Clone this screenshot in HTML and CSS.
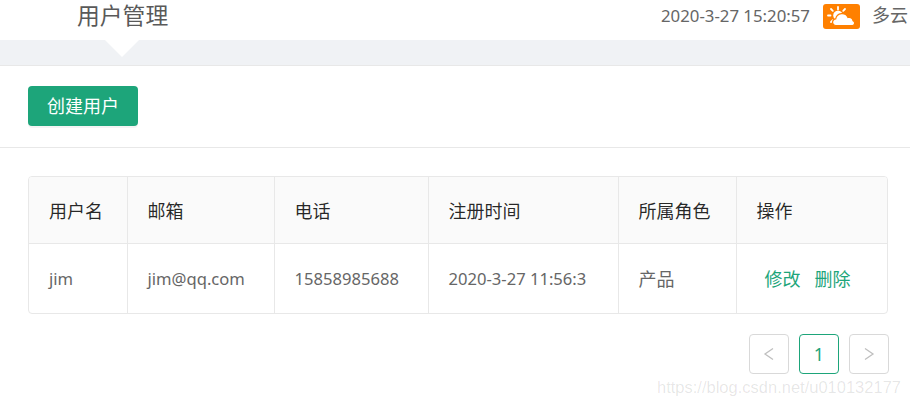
FILE: index.html
```html
<!DOCTYPE html>
<html lang="zh-CN">
<head>
	<meta charset="utf-8">
	<title>用户管理</title>
	<link rel="stylesheet" href="styles.css">
</head>
<body>
	<div class="top-bar">
		<h1 class="page-title">用户管理</h1>
		<div class="top-info">
			<span class="now-time">2020-3-27 15:20:57</span>
			<span class="weather-icon">
				<svg width="37" height="25" viewBox="0 0 37 25">
					<g stroke="#fff" stroke-width="1.800" stroke-linecap="round">
						<path d="M15 3v2.500M8 5l1.800 1.800M5 11.500h2.500M8 18l1.800-1.800M22 5l-1.800 1.800"/>
					</g>
					<circle cx="15" cy="11.500" r="4.800" fill="#fff"/>
					<path d="M13 21.500a3.300 3.300 0 0 1 -.3-6.600a6.500 6.500 0 0 1 12.300-1.400a4.200 4.200 0 0 1 5 3.200a2.500 2.500 0 0 1 -.5 4.800z" fill="#fff" stroke="#ff8000" stroke-width="1.200"/>
				</svg>
			</span>
			<span class="weather-text">多云</span>
		</div>
	</div>
	<div class="crumb-band"><span class="crumb-arrow"></span></div>
	<div class="action-bar">
		<button class="create-btn">创建用户</button>
	</div>
	<div class="content">
		<div class="table-wrapper">
			<table class="user-table">
				<colgroup>
					<col class="col-name">
					<col class="col-mail">
					<col class="col-phone">
					<col class="col-time">
					<col class="col-role">
					<col>
				</colgroup>
				<thead>
					<tr>
						<th>用户名</th>
						<th>邮箱</th>
						<th>电话</th>
						<th>注册时间</th>
						<th>所属角色</th>
						<th>操作</th>
					</tr>
				</thead>
				<tbody>
					<tr>
						<td class="latin-cell">jim</td>
						<td class="latin-cell">jim@qq.com</td>
						<td class="latin-cell">15858985688</td>
						<td class="latin-cell">2020-3-27 11:56:3</td>
						<td>产品</td>
						<td class="op-cell"><a href="#">修改</a><a href="#">删除</a></td>
					</tr>
				</tbody>
			</table>
		</div>
		<ul class="pager">
			<li>
				<svg width="12" height="14" viewBox="0 0 12 14"><path d="M10 1.500L2 7l8 5.500" fill="none" stroke="#bfbfbf" stroke-width="1.300"/></svg>
			</li>
			<li class="active">1</li>
			<li>
				<svg width="12" height="14" viewBox="0 0 12 14"><path d="M2 1.500L10 7l-8 5.500" fill="none" stroke="#bfbfbf" stroke-width="1.300"/></svg>
			</li>
		</ul>
	</div>
	<div class="watermark">https://blog.csdn.net/u010132177</div>
</body>
</html>
```

FILE: styles.css
```css
* {
	margin: 0;
	padding: 0;
	box-sizing: border-box;
}

html, body {
	height: 405px;
	overflow: hidden;
}

body {
	position: relative;
	background: #fff;
	color: #666;
	font-family: "Noto Sans", "Noto Sans CJK SC", sans-serif;
	font-size: 18px;
}

.top-bar {
	display: flex;
	justify-content: space-between;
	height: 40px;
	padding-left: 77px;
}

.page-title {
	font-size: 22.800px;
	font-weight: 400;
	line-height: 31px;
	color: #595959;
}

.top-info {
	display: flex;
	align-items: flex-start;
	width: 249px;
	flex: none;
	line-height: 31px;
}

.now-time {
	width: 162px;
	flex: none;
	font-size: 16.800px;
}

.weather-icon {
	display: block;
	width: 37px;
	height: 25px;
	margin-top: 4px;
	background: #ff8000;
	border-radius: 3px;
	flex: none;
}

.weather-icon svg {
	display: block;
}

.weather-text {
	margin-left: 12px;
	white-space: nowrap;
}

.crumb-band {
	position: relative;
	height: 26px;
	background: #f0f2f5;
	border-bottom: 1px solid #e8e8e8;
}

.crumb-arrow {
	position: absolute;
	left: 105px;
	top: 0;
	width: 0;
	height: 0;
	border-left: 17px solid transparent;
	border-right: 17px solid transparent;
	border-top: 17px solid #fff;
}

.action-bar {
	height: 82px;
	padding: 20px 28px 0;
	border-bottom: 1px solid #e8e8e8;
}

.create-btn {
	display: block;
	width: 110px;
	height: 40px;
	padding-bottom: 2px;
	border: none;
	border-radius: 4px;
	background: #1da57a;
	box-shadow: 0 2px 0 rgba(0, 0, 0, 0.045);
	color: #fff;
	font-family: inherit;
	font-size: 18px;
}

.content {
	padding: 28px 22px 0 28px;
}

.table-wrapper {
	border: 1px solid #e8e8e8;
	border-radius: 4px;
	overflow: hidden;
}

.user-table {
	width: 100%;
	border-collapse: collapse;
	table-layout: fixed;
}

.col-name { width: 98px; }
.col-mail { width: 147px; }
.col-phone { width: 154px; }
.col-time { width: 190px; }
.col-role { width: 118px; }

.user-table th,
.user-table td {
	padding: 0 20px;
	text-align: left;
	border-right: 1px solid #e8e8e8;
	white-space: nowrap;
}

.user-table th:last-child,
.user-table td:last-child {
	border-right: none;
}

.user-table th {
	height: 66px;
	background: #fafafa;
	border-bottom: 1px solid #e8e8e8;
	color: rgba(0, 0, 0, 0.85);
	font-weight: 400;
}

.user-table td {
	height: 70px;
}

.user-table td.latin-cell {
	font-size: 16.600px;
}

.user-table td.op-cell {
	padding-left: 28px;
}

.op-cell a {
	margin-right: 14px;
	color: #1da57a;
	text-decoration: none;
}

.pager {
	display: flex;
	justify-content: flex-end;
	gap: 10px;
	margin-top: 20px;
	margin-right: -1px;
	list-style: none;
}

.pager li {
	display: flex;
	align-items: center;
	justify-content: center;
	width: 40px;
	height: 40px;
	border: 1px solid #d9d9d9;
	border-radius: 4px;
}

.pager li.active {
	border-color: #1da57a;
	color: #1da57a;
}

.watermark {
	position: absolute;
	right: 9px;
	top: 377px;
	color: rgba(0, 0, 0, 0.1);
	font-family: "Liberation Sans", sans-serif;
	font-size: 16.500px;
	line-height: 20px;
}
```
